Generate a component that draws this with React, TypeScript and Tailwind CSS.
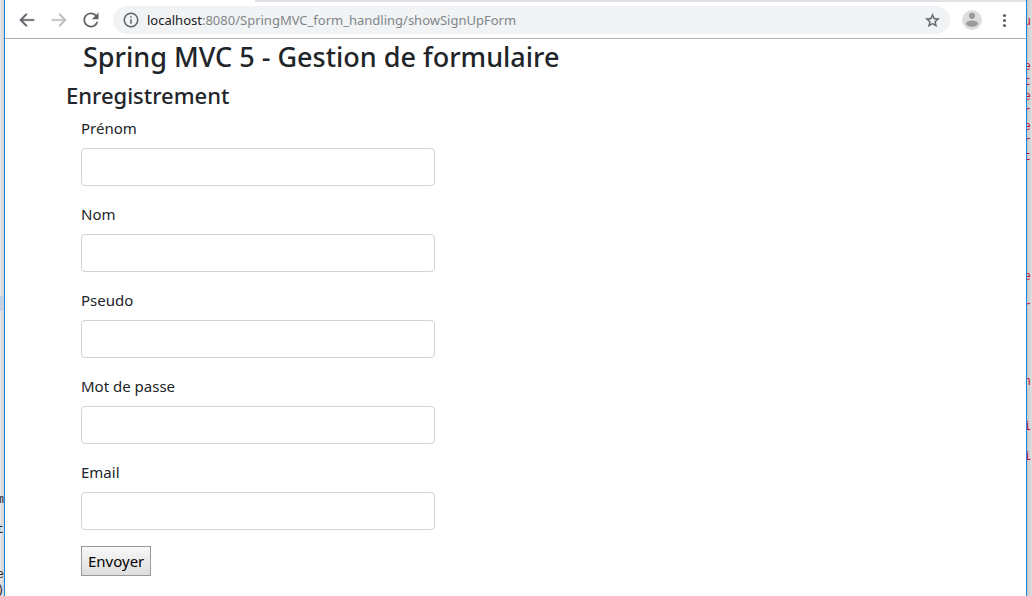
import type { ReactNode } from "react";

const fields = [
  { id: "firstName", label: "Prénom", type: "text" },
  { id: "lastName", label: "Nom", type: "text" },
  { id: "userName", label: "Pseudo", type: "text" },
  { id: "password", label: "Mot de passe", type: "password" },
  { id: "email", label: "Email", type: "email" },
];

// Editor lines that show past each side of the browser window, by row.
const rightCode: Record<number, string> = {
  0: "u", 3: "e", 4: "t", 5: "e", 6: "r", 7: "e", 8: "r", 9: "t",
  17: "e", 19: "r", 24: "n", 27: "i", 29: "i",
};
const leftCode: Record<number, string> = { 33: "m", 35: "t", 38: "e", 39: ")" };

function toLines(rows: Record<number, string>) {
  return Array.from({ length: 40 }, (_, i) => rows[i] ?? "").join("\n");
}

function ToolButton({ label, children }: { label: string; children: ReactNode }) {
  return (
    <button type="button" aria-label={label} className="flex size-8 shrink-0 items-center justify-center text-[#5f6368]">
      {children}
    </button>
  );
}

function Toolbar() {
  return (
    <header className="border-b border-[#b0b0b0] bg-white">
      <div className="flex h-[2px]">
        <div className="w-[250px] rounded-tr-[2px] bg-white" />
        <div className="flex-1 bg-[#dee1e6]" />
      </div>
      <div className="flex h-9 items-center px-[6px]">
        <ToolButton label="Retour">
          <svg viewBox="0 0 24 24" className="size-5" fill="currentColor" stroke="currentColor" strokeWidth="0.4">
            <path d="M20.5 11H6.8l5.6-5.6L11 4l-8 8 8 8 1.4-1.4L6.8 13h13.7z" />
          </svg>
        </ToolButton>
        <ToolButton label="Avancer">
          <svg viewBox="0 0 24 24" className="size-5 text-[#bcbec1]" fill="currentColor" stroke="currentColor" strokeWidth="0.4">
            <path d="M3.5 11h13.7l-5.6-5.6L13 4l8 8-8 8-1.4-1.4 5.6-5.6H3.5z" />
          </svg>
        </ToolButton>
        <ToolButton label="Actualiser">
          <svg viewBox="0 0 24 24" className="size-5" fill="currentColor">
            <path d="M18.4 5.6A9 9 0 1 0 20.7 14h-2.2A6.9 6.9 0 1 1 12 5a6.8 6.8 0 0 1 4.9 2.1L13 11h8V3z" />
          </svg>
        </ToolButton>
        <div className="ml-[6px] flex h-7 min-w-0 flex-1 items-center rounded-full bg-[#f1f3f4] pl-[9px] pr-[2px]">
          <svg viewBox="0 0 24 24" className="size-[18px] shrink-0 text-[#5f6368]" fill="currentColor">
            <path d="M11 7h2v2h-2zm0 4h2v6h-2zm1-9a10 10 0 1 0 0 20 10 10 0 0 0 0-20zm0 18a8 8 0 1 1 0-16 8 8 0 0 1 0 16z" />
          </svg>
          <span className="ml-[7px] min-w-0 flex-1 truncate text-[13px] leading-5 text-[#80868b]">
            <span className="text-[#202124]">localhost</span>:8080/SpringMVC_form_handling/showSignUpForm
          </span>
          <ToolButton label="Ajouter aux favoris">
            <svg viewBox="0 0 24 24" className="size-[17px]" fill="currentColor" stroke="currentColor" strokeWidth="0.4">
              <path d="M22 9.24l-7.19-.62L12 2 9.19 8.63 2 9.24l5.46 4.73L5.82 21 12 17.27 18.18 21l-1.63-7.03zM12 15.4l-3.76 2.27 1-4.28-3.32-2.88 4.38-.38L12 6.1l1.71 4.04 4.38.38-3.32 2.88 1 4.28z" />
            </svg>
          </ToolButton>
        </div>
        <div className="ml-[6px] flex">
          <ToolButton label="Profil">
            <svg viewBox="0 0 20 20" className="size-5">
              <circle cx="10" cy="10" r="10" fill="#dedede" />
              <circle cx="10" cy="5.8" r="3.1" fill="#9b9b9b" />
              <path d="M4 13.6c0-2 3.2-3 6-3s6 1 6 3c0 1.7-3 3.2-6 3.2s-6-1.5-6-3.2z" fill="#9b9b9b" />
            </svg>
          </ToolButton>
          <ToolButton label="Menu">
            <svg viewBox="0 0 20 20" className="size-5" fill="currentColor">
              <circle cx="10.5" cy="5.5" r="1.6" />
              <circle cx="10.5" cy="10.5" r="1.6" />
              <circle cx="10.5" cy="15.5" r="1.6" />
            </svg>
          </ToolButton>
        </div>
      </div>
    </header>
  );
}

export default function App() {
  return (
    <div className="flex h-screen overflow-hidden bg-white font-['Noto_Sans',sans-serif] text-[#212529]">
      <div aria-hidden="true" className="flex w-1 shrink-0 flex-col items-end overflow-hidden bg-[linear-gradient(transparent_296px,#c5d0e3_296px,#c5d0e3_311px,transparent_311px),linear-gradient(to_right,#e8e8e8,#d2d2d2)]">
        <pre className="-mt-0.5 font-['Liberation_Mono',monospace] text-xs leading-[15px] text-[#26262e]">{toLines(leftCode)}</pre>
      </div>
      <div className="flex min-w-0 flex-1 flex-col border-x border-[#1883d7]">
        <Toolbar />
        <main className="overflow-hidden pl-[61px]">
          <h1 className="pl-[17px] pt-[1px] text-[27px] font-medium leading-[34px]">Spring MVC 5 - Gestion de formulaire</h1>
          <h2 className="mt-[7px] text-[22px] font-medium leading-7">Enregistrement</h2>
          <form className="mt-[7px] pl-[15px]" onSubmit={(e) => e.preventDefault()}>
            {fields.map((field) => (
              <div key={field.id} className="mb-4 flex flex-col gap-2">
                <label htmlFor={field.id} className="self-start text-[15px] leading-6">{field.label}</label>
                <input
                  id={field.id}
                  name={field.id}
                  type={field.type}
                  className="h-[38px] w-[354px] max-w-full rounded border border-[#ced4da] bg-white px-3 text-[15px] outline-none"
                />
              </div>
            ))}
            <button type="submit" className="h-[30px] border border-[#999] bg-linear-to-b from-[#f8f8f8] to-[#dddddd] px-[6px] text-[15px] leading-6 text-black">
              Envoyer
            </button>
          </form>
        </main>
      </div>
      <div aria-hidden="true" className="flex w-[5px] shrink-0 flex-col items-end overflow-hidden bg-linear-to-r from-[#c8c8c8] to-[#dedede]">
        <pre className="pr-px pt-[15px] font-['Liberation_Mono',monospace] text-xs leading-[15px] text-[#c8102e]">{toLines(rightCode)}</pre>
      </div>
    </div>
  );
}
